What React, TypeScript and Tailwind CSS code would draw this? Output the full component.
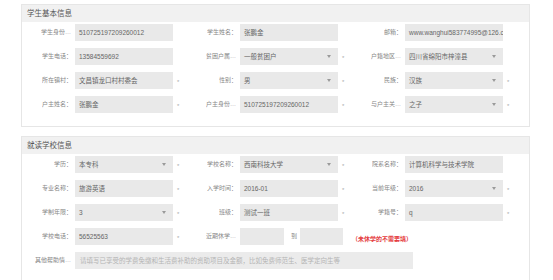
import React from 'react'

type Field = {
  label: string
  value?: string
  kind?: 'input' | 'select' | 'range' | 'textarea'
  star?: boolean
}

const basicInfo: Field[][] = [
  [
    { label: '学生身份证号：', value: '510725197209260012' },
    { label: '学生姓名：', value: '张鹏金' },
    { label: '邮箱：', value: 'www.wanghui583774995@126.com' },
  ],
  [
    { label: '学生电话：', value: '13584559692' },
    { label: '贫困户属性：', value: '一般贫困户', kind: 'select', star: true },
    { label: '户籍地区县：', value: '四川省绵阳市梓潼县', kind: 'select' },
  ],
  [
    { label: '所在镇村：', value: '文昌镇龙口村村委会', star: true },
    { label: '性别：', value: '男', kind: 'select', star: true },
    { label: '民族：', value: '汉族', kind: 'select', star: true },
  ],
  [
    { label: '户主姓名：', value: '张鹏金', star: true },
    { label: '户主身份证号：', value: '510725197209260012', star: true },
    { label: '与户主关系：', value: '之子', kind: 'select', star: true },
  ],
]

const schoolInfo: Field[][] = [
  [
    { label: '学历：', value: '本专科', kind: 'select', star: true },
    { label: '学校名称：', value: '西南科技大学', kind: 'select', star: true },
    { label: '院系名称：', value: '计算机科学与技术学院' },
  ],
  [
    { label: '专业名称：', value: '旅游英语', star: true },
    { label: '入学时间：', value: '2016-01', star: true },
    { label: '当前年级：', value: '2016', kind: 'select', star: true },
  ],
  [
    { label: '学制年限：', value: '3', kind: 'select', star: true },
    { label: '班级：', value: '测试一班', star: true },
    { label: '学籍号：', value: 'q', star: true },
  ],
  [
    { label: '学校电话：', value: '56525563', star: true },
    { label: '近期休学时间：', kind: 'range' },
  ],
  [
    {
      label: '其他帮助情况：',
      value: '请填写已享受的学费免缴和生活费补助的资助项目及金额，比如免费师范生、医学定向生等',
      kind: 'textarea',
    },
  ],
]

function Caret() {
  return (
    <svg width="4" height="3" viewBox="0 0 4 3" className="absolute right-[7px] top-[7px]">
      <path d="M0 0h4L2 3z" fill="#9a9a9a" />
    </svg>
  )
}

function Label({ text, wide }: { text: string; wide?: boolean }) {
  return (
    <div className="flex w-[50px] shrink-0 justify-end">
      <span className={`block truncate text-right text-[6px] text-[#888] ${wide ? 'max-w-[37px]' : 'max-w-[31px]'}`}>
        {text}
      </span>
    </div>
  )
}

function Box({ value, select, className = 'w-[98px]' }: { value?: string; select?: boolean; className?: string }) {
  return (
    <div className={`relative flex h-[17px] shrink-0 items-center overflow-hidden whitespace-nowrap bg-[#e9e9e9] pl-[4px] text-[6.5px] text-[#666] ${className}`}>
      {value}
      {select && <Caret />}
    </div>
  )
}

function Cell({ field }: { field: Field }) {
  if (field.kind === 'range') {
    return (
      <div className="flex items-center">
        <Label text={field.label} />
        <div className="ml-[3px] flex items-center">
          <Box className="w-[44px]" />
          <span className="ml-[7px] w-[6px] text-[6px] text-[#888]">到</span>
          <Box className="ml-[3px] w-[43px]" />
          <span className="ml-[9px] pt-[6px] text-[6px] font-bold text-[#e4393c]">（未休学的不需要填）</span>
        </div>
      </div>
    )
  }

  if (field.kind === 'textarea') {
    return (
      <div className="flex items-center">
        <Label text={field.label} wide />
        <div className="ml-[3px] flex h-[17px] w-[338px] items-center whitespace-nowrap bg-[#ebebeb] pl-[5px] text-[6.5px] text-[#b4b4b4]">
          {field.value}
        </div>
      </div>
    )
  }

  return (
    <div className="flex w-[165px] shrink-0 items-center">
      <Label text={field.label} />
      <Box value={field.value} select={field.kind === 'select'} className="ml-[3px] w-[98px]" />
      <span className="w-[14px] pl-[4px] pt-[3px] text-[6px] leading-none text-[#aaa]">{field.star ? '*' : ''}</span>
    </div>
  )
}

function Panel({ title, rows, className = '' }: { title: string; rows: Field[][]; className?: string }) {
  return (
    <section className={`ml-[21px] w-[509px] border border-[#e6e6e6] bg-white ${className}`}>
      <h2 className="flex h-[17px] items-center bg-[#f1f1f1] pl-[5px] text-[7.5px] font-normal text-[#555]">{title}</h2>
      <div className="flex flex-col gap-[7px] pt-[2px] pb-[13px]">
        {rows.map((row, i) => (
          <div key={i} className="flex">
            {row.map((f) => (
              <Cell key={f.label} field={f} />
            ))}
          </div>
        ))}
      </div>
    </section>
  )
}

export default function App() {
  return (
    <div className="h-[280px] w-[553px] overflow-hidden bg-white pt-[4px] font-['Liberation_Sans','Noto_Sans_CJK_SC',sans-serif]">
      <Panel title="学生基本信息" rows={basicInfo} />
      <Panel title="就读学校信息" rows={schoolInfo} className="mt-[9px]" />
    </div>
  )
}
